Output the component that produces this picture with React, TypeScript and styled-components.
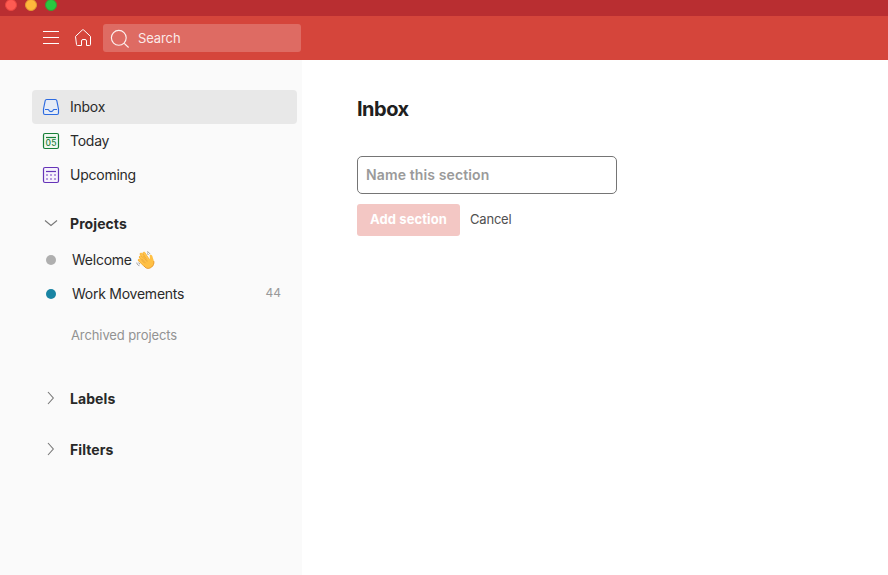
import React from "react";
import styled, { createGlobalStyle } from "styled-components";

const GlobalStyle = createGlobalStyle`
  * { box-sizing: border-box; }
  body { margin: 0; background: #fff; font-family: Inter, "Liberation Sans", sans-serif; font-size: 14px; color: #2a2a2a; }
  button, input { font-family: inherit; }
  svg { display: block; flex: none; }
`;

const Page = styled.div`
  width: 100%;
  height: 100vh;
  display: flex;
  flex-direction: column;
  overflow: hidden;
`;

const TitleBar = styled.div`
  height: 16px;
  flex: none;
  display: flex;
  gap: 8px;
  padding-left: 5px;
  background: #b92e31;
`;

const WindowDot = styled.span<{ $fill: string; $edge: string }>`
  width: 12px;
  height: 12px;
  margin-top: -1px;
  border-radius: 50%;
  background: ${(p) => p.$fill};
  border: 1px solid ${(p) => p.$edge};
`;

const TopBar = styled.header`
  height: 44px;
  flex: none;
  display: flex;
  align-items: center;
  padding-left: 39px;
  background: #d5453b;
  color: #fff;
`;

const IconButton = styled.button`
  width: 24px;
  height: 24px;
  margin-right: 8px;
  padding: 0;
  border: 0;
  background: none;
  color: inherit;
`;

const SearchBox = styled.div`
  width: 198px;
  height: 28px;
  display: flex;
  align-items: center;
  padding-left: 5px;
  border-radius: 3px;
  background: #de6b63;
`;

const SearchText = styled.span`
  margin-left: 6px;
  font-size: 13px;
  line-height: 28px;
  letter-spacing: -0.1px;
  color: #fbe9e8;
`;

const Body = styled.div`
  flex: 1;
  display: flex;
`;

const Sidebar = styled.nav`
  width: 302px;
  flex: none;
  padding: 30px 5px 0 32px;
  background: #fafafa;
`;

const NavRow = styled.div<{ $active?: boolean }>`
  height: 34px;
  display: flex;
  align-items: center;
  padding-left: 7px;
  border-radius: 4px;
  background: ${(p) => (p.$active ? "#e8e8e8" : "transparent")};
  letter-spacing: -0.25px;
`;

const Label = styled.span`
  margin-left: 7px;
  line-height: 20px;
`;

const SectionHeader = styled.div<{ $gap: number }>`
  height: 34px;
  margin-top: ${(p) => p.$gap}px;
  padding-left: 7px;
  display: flex;
  align-items: center;
  font-weight: 700;
  letter-spacing: 0.08px;
  color: #282828;
`;

const ProjectList = styled.div`
  margin-top: 2px;
`;

const ProjectRow = styled.div`
  height: 34px;
  display: flex;
  align-items: center;
  padding: 0 16px 0 14px;
`;

const ProjectDot = styled.span<{ $color: string }>`
  width: 10px;
  height: 10px;
  margin-right: 16px;
  border-radius: 50%;
  background: ${(p) => p.$color};
`;

const ProjectName = styled.span`
  line-height: 20px;
  margin-right: 4px;
  letter-spacing: -0.25px;
`;

const Count = styled.span`
  margin-left: auto;
  padding-bottom: 3px;
  font-size: 12px;
  color: #999;
`;

const Archived = styled.div`
  margin: 14px 0 0 39px;
  font-size: 13px;
  line-height: 20px;
  letter-spacing: -0.1px;
  color: #929292;
`;

const Main = styled.main`
  flex: 1;
  padding: 36px 0 0 55px;
`;

const Title = styled.h1`
  margin: 0;
  font-size: 20px;
  line-height: 26px;
  font-weight: 700;
  letter-spacing: -0.5px;
  color: #202020;
`;

const NameInput = styled.input`
  display: block;
  width: 260px;
  height: 38px;
  margin-top: 34px;
  padding: 0 8px 2px;
  border: 1px solid #757575;
  border-radius: 5px;
  background: #fff;
  font-size: 14px;
  font-weight: 600;
  letter-spacing: 0.12px;
  outline: 0;
  &::placeholder { color: #9a9a9a; opacity: 1; }
`;

const Actions = styled.div`
  display: flex;
  align-items: center;
  gap: 10px;
  margin-top: 10px;
`;

const AddButton = styled.button`
  width: 103px;
  height: 32px;
  padding: 0 0 2px;
  border: 0;
  border-radius: 3px;
  background: #f3c7c4;
  color: #fff;
  font-size: 13px;
  font-weight: 700;
  letter-spacing: 0.1px;
`;

const CancelButton = styled.button`
  padding: 0 0 2px;
  border: 0;
  background: none;
  color: #505050;
  font-size: 13px;
  letter-spacing: -0.2px;
`;

const MenuIcon = () => (
  <svg width="24" height="24" stroke="currentColor" fill="none">
    <path d="M4 5.5h16M4 11.5h16M4 17.5h16" />
  </svg>
);

const HomeIcon = () => (
  <svg width="24" height="24" stroke="currentColor" fill="none" strokeLinejoin="round">
    <path d="M4.5 10.4 11.3 4a1 1 0 0 1 1.4 0l6.8 6.4v8.1a1 1 0 0 1-1 1h-3v-4.5a1.5 1.5 0 0 0-1.5-1.5h-2a1.5 1.5 0 0 0-1.5 1.5v4.5h-4a1 1 0 0 1-1-1z" />
  </svg>
);

const SearchIcon = () => (
  <svg width="24" height="24" stroke="#fdf0ef" fill="none">
    <circle cx="10.8" cy="11.8" r="7.4" strokeWidth="1.15" />
    <path d="m16.2 17.3 4.4 4.2" strokeWidth="1.15" />
  </svg>
);

const InboxIcon = () => (
  <svg width="24" height="24" stroke="#2d6be0" fill="none" strokeLinejoin="round">
    <path d="M7.7 4.5h8.6a1.5 1.5 0 0 1 1.5 1.2l1.7 8.3v4a1.5 1.5 0 0 1-1.5 1.5H6A1.5 1.5 0 0 1 4.5 18v-4l1.7-8.3a1.5 1.5 0 0 1 1.5-1.2z" fill="#e6ecf6" strokeWidth="1.15" />
    <path d="M6 14.5h3c.5 0 .7.3.9.8a2.3 2.3 0 0 0 4.2 0c.2-.5.4-.8.9-.8h3" strokeWidth="1.15" />
  </svg>
);

const TodayIcon = () => (
  <svg width="24" height="24">
    <rect x="4.5" y="4.5" width="15" height="15" rx="1.5" fill="#f1f8f2" stroke="#188038" strokeWidth="1.2" />
    <path d="M7 8.5h10" stroke="#188038" strokeWidth="1.2" />
    <text x="12.2" y="17" textAnchor="middle" fontSize="8.5" fontWeight="500" letterSpacing="0.4" fill="#188038">05</text>
  </svg>
);

const UpcomingIcon = () => (
  <svg width="24" height="24">
    <rect x="4.5" y="4.5" width="15" height="15" rx="1.5" fill="#f6f1fc" stroke="#6534b8" strokeWidth="1.2" />
    <path d="M7 8.5h10" stroke="#6534b8" strokeWidth="1.2" />
    <path d="M7 12h2m2 0h2m2 0h2M7 16h2m2 0h2m2 0h2" stroke="#b69ae0" strokeWidth="2" />
  </svg>
);

const Chevron = ({ open }: { open?: boolean }) => (
  <svg width="24" height="24" stroke="#777" fill="none" strokeWidth="1.1">
    <path d={open ? "m6 8.5 6 5 6-5" : "m9 5 5.3 6L9 17"} />
  </svg>
);

const WaveIcon = () => (
  <svg width="19" height="19" viewBox="0 0 19 19" role="img" aria-label="Waving hand">
    <g fill="none" strokeLinecap="round">
      <path d="m4.3 6.1 5.2 5.8M5.1 3.1l5.5 7.2M8 2.2l4.6 7.1M3.2 9.1l5.1 5" stroke="#eda52d" strokeWidth="2.7" />
      <path d="m4.3 5.8 5.2 5.8M5.1 2.8l5.5 7.2M8 1.9l4.6 7.1M3.2 8.8l5.1 5" stroke="#ffc34d" strokeWidth="2" />
    </g>
    <path d="M7.1 13.4 13 8.5c1-.8 1-2.1.7-3.5-.3-1.3 1.6-1.9 2.3-.6.6 1.1.8 2.4 1.5 4.3 1 2.7.5 5.7-1.9 7.5-2.8 2.1-5.7 1.3-8.5-2.8z" fill="#ffc044" />
    <path d="M8 15c2.6 3.3 5.2 2.8 7.5 1.1 1.9-1.5 2.7-3.5 2.3-6" fill="none" stroke="#e99a2c" />
    <path d="m5.6 7.8 4 4.4m-2.5-7 4.1 5.5" stroke="#df9830" strokeWidth=".6" />
    <path d="M11 .8c1.5.2 2.5 1 2.9 2.3M11 2.6c.7.1 1.2.5 1.4 1.2M.8 11.6c.2 1.6 1 2.7 2.6 3.1M2.6 11.6c.2.8.6 1.2 1.4 1.4" fill="none" stroke="#858585" strokeWidth=".8" />
  </svg>
);

export default function App() {
  return (
    <Page>
      <GlobalStyle />
      <TitleBar>
        <WindowDot $fill="#ff5b52" $edge="#e9453f" />
        <WindowDot $fill="#ffb83c" $edge="#e09b31" />
        <WindowDot $fill="#28c840" $edge="#399b33" />
      </TitleBar>
      <TopBar>
        <IconButton aria-label="Menu"><MenuIcon /></IconButton>
        <IconButton aria-label="Home"><HomeIcon /></IconButton>
        <SearchBox>
          <SearchIcon />
          <SearchText>Search</SearchText>
        </SearchBox>
      </TopBar>
      <Body>
        <Sidebar>
          <NavRow $active><InboxIcon /><Label>Inbox</Label></NavRow>
          <NavRow><TodayIcon /><Label>Today</Label></NavRow>
          <NavRow><UpcomingIcon /><Label>Upcoming</Label></NavRow>
          <SectionHeader $gap={15}><Chevron open /><Label>Projects</Label></SectionHeader>
          <ProjectList>
            <ProjectRow><ProjectDot $color="#afafaf" /><ProjectName>Welcome</ProjectName><WaveIcon /></ProjectRow>
            <ProjectRow><ProjectDot $color="#1984a3" /><ProjectName>Work Movements</ProjectName><Count>44</Count></ProjectRow>
          </ProjectList>
          <Archived>Archived projects</Archived>
          <SectionHeader $gap={37}><Chevron /><Label>Labels</Label></SectionHeader>
          <SectionHeader $gap={17}><Chevron /><Label>Filters</Label></SectionHeader>
        </Sidebar>
        <Main>
          <Title>Inbox</Title>
          <NameInput placeholder="Name this section" />
          <Actions>
            <AddButton>Add section</AddButton>
            <CancelButton>Cancel</CancelButton>
          </Actions>
        </Main>
      </Body>
    </Page>
  );
}
